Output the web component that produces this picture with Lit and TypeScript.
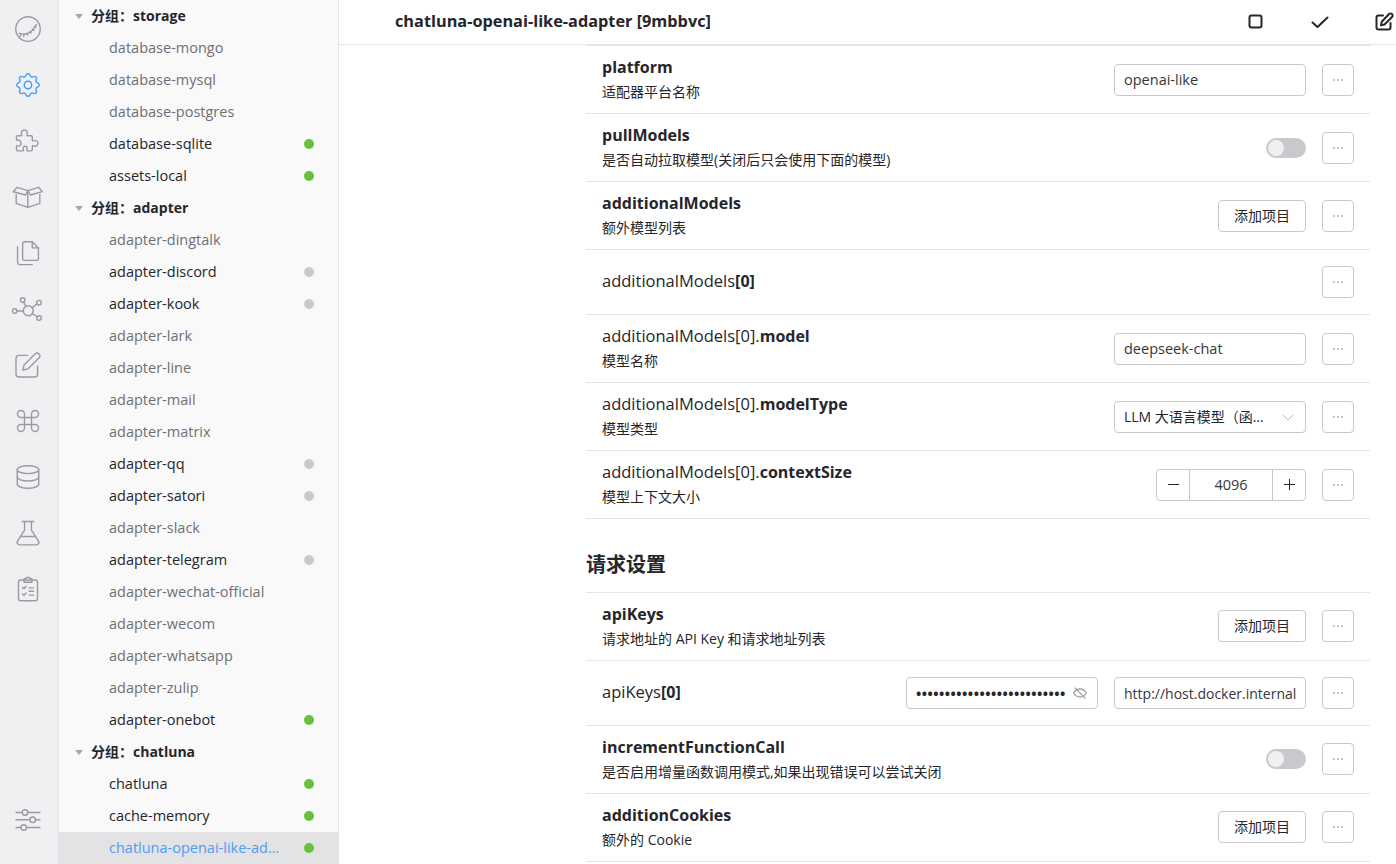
import { LitElement, html, css, svg } from "lit";
import { customElement } from "lit/decorators.js";

const sc = (s: number, body: unknown, cx = 12, cy = 12) =>
  svg`<g transform="translate(16 16) scale(${s}) translate(${-cx} ${-cy})" stroke-width=${1.4 / s}>${body}</g>`;

const ICONS: Record<string, unknown> = {
  logo: sc(1.2, svg`<circle cx="12" cy="12" r="10.2"/><path d="M4.500 15.500c3.500 1.600 8.500.8 12-3.200 1.200-1.400 1.900-2.800 2.400-4.200"/><path d="M6 16.600l-.8 1.600M8.700 16.600l-.3 1.700M11.300 15.600l.5 1.600M13.600 14.100l1 1.300M15.600 12.200l1.400.9M17 10l1.500.5"/>`),
  gear: sc(1.25, svg`<path d="M10.325 4.317c.426 -1.756 2.924 -1.756 3.35 0a1.724 1.724 0 0 0 2.573 1.066c1.543 -.94 3.31 .826 2.37 2.37a1.724 1.724 0 0 0 1.065 2.572c1.756 .426 1.756 2.924 0 3.35a1.724 1.724 0 0 0 -1.066 2.573c.94 1.543 -.826 3.31 -2.37 2.37a1.724 1.724 0 0 0 -2.572 1.065c-.426 1.756 -2.924 1.756 -3.35 0a1.724 1.724 0 0 0 -2.573 -1.066c-1.543 .94 -3.31 -.826 -2.37 -2.37a1.724 1.724 0 0 0 -1.065 -2.572c-1.756 -.426 -1.756 -2.924 0 -3.35a1.724 1.724 0 0 0 1.066 -2.573c-.94 -1.543 .826 -3.31 2.37 -2.37c1 .608 2.296 .07 2.572 -1.065z"/><circle cx="12" cy="12" r="3"/>`),
  puzzle: sc(1.1, svg`<path d="M2 10.500V8.200c0-.6.4-1 1-1h3.200c.7 0 1-.7.6-1.300-1-1.700.2-3.900 2.400-3.900s3.400 2.200 2.400 3.900c-.4.6-.1 1.300.6 1.300h3.200c.6 0 1 .4 1 1v3c0 .7.7 1 1.300.6 1.700-1 3.800.2 3.800 2.300s-2.100 3.300-3.800 2.300c-.6-.4-1.300-.1-1.300.6v3c0 .6-.4 1-1 1h-3.300c-.7 0-1-.7-.6-1.200.8-1.400-.1-3-1.600-3s-2.400 1.600-1.600 3c.3.500 0 1.200-.6 1.200H3c-.6 0-1-.4-1-1v-3c0-.6.5-1 1-.7 1.600.8 3.300-.2 3.300-1.800S4.600 10.400 3 11.200c-.5.300-1 0-1-.7z"/>`, 12.5, 12),
  box: svg`<g stroke-width="1.400"><path d="M5.200 6.300 15.800 9.700 26.800 6.300 30.200 10.700 18.500 14 15.800 9.700 13.500 14 1.200 10.700z"/><path d="M4.200 13.500v8.800l11.600 4 12-4v-8.800"/><path d="M15.800 9.700v16.600"/></g>`,
  files: sc(1.13, svg`<path d="M9 2h7l5.500 5.500V17c0 .8-.7 1.500-1.500 1.500H9c-.8 0-1.500-.7-1.500-1.500V3.500C7.500 2.700 8.200 2 9 2z"/><path d="M16 2v5.500h5.500"/><path d="M3 6.500V20c0 1.300 1 2.300 2.300 2.300H16"/>`, 12.25, 12),
  graph: svg`<g stroke-width="1.400"><circle cx="16.300" cy="17.700" r="5"/><circle cx="2.700" cy="18" r="2.300"/><circle cx="10.700" cy="7" r="2.300"/><circle cx="27" cy="9.700" r="2.300"/><circle cx="27" cy="25" r="2.300"/><path d="M5 18h6.300M11.700 9.100l2.100 4.300M25 11 20.100 14.600M25 23.500 20.200 20.700"/></g>`,
  edit: sc(1.2, svg`<path d="M11.500 4H4.500C3.100 4 2 5.100 2 6.500v13C2 20.900 3.100 22 4.500 22h13c1.400 0 2.500-1.100 2.500-2.500V13"/><path d="M18.300 2.500a2.300 2.300 0 0 1 3.200 3.200L12 15.200l-4.300 1 1-4.200z"/>`),
  cmd: sc(1.17, svg`<path d="M9 9V6a3 3 0 1 0-3 3zM9 9h6M15 9h3a3 3 0 1 0-3-3zM15 9v6M15 15v3a3 3 0 1 0 3-3zM15 15H9M9 15H6a3 3 0 1 0 3 3zM9 15V9"/>`),
  db: sc(1.13, svg`<ellipse cx="12" cy="5.500" rx="9.500" ry="3.500"/><path d="M2.500 5.500v13c0 1.900 4.300 3.500 9.500 3.500s9.500-1.600 9.500-3.500v-13"/><path d="M2.500 12c0 1.900 4.300 3.500 9.500 3.500s9.500-1.600 9.500-3.500"/>`, 12, 12),
  flask: sc(1.15, svg`<path d="M7 2h10"/><path d="M9 2v7.500L2.800 19.300C2 20.700 3 22.300 4.600 22.300h14.800c1.600 0 2.600-1.600 1.800-3L15 9.500V2"/><path d="M5.800 15h12.400"/>`),
  clip: sc(1.12, svg`<rect x="3.500" y="4" width="17" height="18.500" rx="2"/><path d="M8.500 4V3.500c0-.6.500-1 1-1h1c0-1.300 3-1.300 3 0h1c.5 0 1 .4 1 1V6h-7z"/><path d="M7 10.500l1.300 1.300 2-2.300M7 16.500l1.300 1.300 2-2.300M13 11h4M13 14h4M13 17.500h4"/>`, 12, 12),
  sliders: sc(1, svg`<path d="M0 4.500h6.200M11.800 4.500H24M0 11.800h13.900M19.500 11.800H24M0 19.500h4.900M10.500 19.500H24"/><circle cx="9" cy="4.500" r="2.800"/><circle cx="16.700" cy="11.800" r="2.800"/><circle cx="7.700" cy="19.500" r="2.800"/>`),
};

const TOP = ["logo", "gear", "puzzle", "box", "files", "graph", "edit", "cmd", "db", "flask", "clip"];

type Item = { g?: boolean; t: string; s?: "on" | "off"; sel?: boolean };
const tree: Item[] = [
  { g: true, t: "分组：storage" },
  { t: "database-mongo" }, { t: "database-mysql" }, { t: "database-postgres" },
  { t: "database-sqlite", s: "on" }, { t: "assets-local", s: "on" },
  { g: true, t: "分组：adapter" },
  { t: "adapter-dingtalk" }, { t: "adapter-discord", s: "off" }, { t: "adapter-kook", s: "off" },
  { t: "adapter-lark" }, { t: "adapter-line" }, { t: "adapter-mail" }, { t: "adapter-matrix" },
  { t: "adapter-qq", s: "off" }, { t: "adapter-satori", s: "off" }, { t: "adapter-slack" },
  { t: "adapter-telegram", s: "off" }, { t: "adapter-wechat-official" }, { t: "adapter-wecom" },
  { t: "adapter-whatsapp" }, { t: "adapter-zulip" }, { t: "adapter-onebot", s: "on" },
  { g: true, t: "分组：chatluna" },
  { t: "chatluna", s: "on" }, { t: "cache-memory", s: "on" },
  { t: "chatluna-openai-like-adapter", s: "on", sel: true },
];

@customElement("app-root")
export class AppRoot extends LitElement {
  static styles = css`
    :host { display: flex; width: 1396px; height: 864px; overflow: hidden; background: #fff; color: #222;
      font-family: "Open Sans", "Noto Sans CJK SC", sans-serif; font-size: 14px; }
    .bar { width: 58px; flex: none; background: #f0f0f3; border-right: 1px solid #e4e5ea; display: flex; flex-direction: column; padding-top: 1px; box-sizing: content-box; }
    .ico { height: 56px; width: 55px; flex: none; display: flex; align-items: center; justify-content: center; }
    .ico svg { width: 32px; height: 32px; flex: none; fill: none; stroke: #9b9b9f; stroke-linecap: round; stroke-linejoin: round; overflow: visible; }
    .ico.active svg { stroke: #409eff; }
    .spacer { flex: 1; }
    .foot { height: 16px; flex: none; }
    .side { width: 279px; flex: none; background: #f9f9fa; border-right: 1px solid #e4e5ea; overflow: hidden; }
    .node { height: 32px; display: flex; align-items: center; padding-left: 50px; padding-right: 24px; color: #6f6f73; font-size: 14.500px; }
    .node.on, .node.off { color: #26262a; }
    .node.g { color: #26262a; font-weight: 700; padding-left: 16px; font-size: 14px; }
    .node.sel { background: #e3e3e6; color: #4c9cf8; }
    .caret { width: 0; height: 0; border: 4px solid transparent; border-top: 5px solid #a8a8ac; border-bottom: 0; margin-right: 8px; }
    .label { flex: 1; min-width: 0; overflow: hidden; text-overflow: ellipsis; white-space: nowrap; margin-bottom: 2px; }
    .dot { width: 10px; height: 10px; border-radius: 50%; flex: none; margin-left: 20px; }
    .node.on .dot { background: #67c23a; }
    .node.off .dot { background: #c8c9cc; }
    .main { flex: 1; min-width: 0; display: flex; flex-direction: column; }
    .head { height: 44px; flex: none; border-bottom: 1px solid #e4e5ea; display: flex; align-items: center; padding-left: 56px; overflow: hidden; }
    .title { flex: 1; font-weight: 700; font-size: 16.300px; color: #26262a; white-space: nowrap; margin-bottom: 2px; }
    .tool { width: 64px; flex: none; display: flex; justify-content: center; }
    .tool svg { width: 20px; height: 20px; fill: none; stroke: #26262a; stroke-width: 2; stroke-linecap: round; stroke-linejoin: round; }
    .tools { display: flex; margin-right: -20px; margin-bottom: 1px; }
    .body { flex: 1; min-height: 0; overflow: hidden; padding: 0 26px 0 247px; }
    .row { display: flex; align-items: center; border-top: 1px solid #e4e5ea; padding: 9px 16px 10px; gap: 16px; }
    .row.single { padding: 16px; }
    .row.end { border-bottom: 1px solid #e4e5ea; }
    .first .row:not(.single) > :not(.left) { margin-top: 1px; }
    .left { flex: 1; min-width: 0; }
    .name { font-size: 16.500px; line-height: 24px; color: #26262a; white-space: nowrap; }
    .single .name { margin-bottom: 2px; }
    .name b { font-weight: 700; font-size: 16px; }
    .desc { font-size: 14px; line-height: 22px; padding-top: 2px; color: #26262a; white-space: nowrap; }
    h2 { margin: 0; font-size: 20px; font-weight: 700; line-height: 30px; padding: 31px 0 12px; color: #26262a; }
    .more { width: 32px; height: 32px; box-sizing: border-box; flex: none; border: 1px solid #c8c9cc; border-radius: 4px; display: flex; align-items: center; justify-content: center; background: #fff; }
    .more svg { width: 12px; height: 4px; fill: #77777c; }
    .input { width: 192px; height: 32px; box-sizing: border-box; flex: none; border: 1px solid #c8c9cc; border-radius: 4px; display: flex; align-items: center; padding: 0 9px; color: #36363a; white-space: nowrap; overflow: hidden; background: #fff; font-size: 14.500px; }
    .input.url { font-size: 14px; }
    .input .txt { flex: 1; min-width: 0; overflow: hidden; }
    .input .ell { text-overflow: ellipsis; font-size: 14px; color: #26262a; margin-bottom: 2px; }
    .pw .txt { font-size: 14px; font-weight: 700; letter-spacing: .5px; color: #26262a; }
    .input svg { width: 16px; height: 16px; flex: none; fill: none; stroke: #b4b6bc; stroke-width: 1; stroke-linecap: round; stroke-linejoin: round; margin-left: 6px; }
    .pw svg { stroke: #a0a2a8; stroke-width: 1.300; }
    .btn { height: 32px; box-sizing: border-box; width: 88px; flex: none; border: 1px solid #c8c9cc; border-radius: 4px; display: flex; align-items: center; justify-content: center; color: #26262a; background: #fff; padding-bottom: 2px; }
    .switch { width: 40px; height: 20px; flex: none; border-radius: 10px; background: #c8c9cc; display: flex; align-items: center; padding: 2px; box-sizing: border-box; }
    .knob { width: 16px; height: 16px; border-radius: 50%; background: #f0f0f3; }
    .num { width: 150px; height: 32px; box-sizing: border-box; flex: none; border: 1px solid #c8c9cc; border-radius: 4px; display: flex; align-items: stretch; background: #fff; color: #36363a; font-size: 14.500px; }
    .num .step { width: 32px; flex: none; display: flex; align-items: center; justify-content: center; }
    .num .step svg { width: 11px; height: 11px; fill: none; stroke: #26262a; stroke-width: 1; }
    .num .val { flex: 1; display: flex; align-items: center; justify-content: center; border-left: 1px solid #c8c9cc; border-right: 1px solid #c8c9cc; }
  `;

  more() {
    return html`<div class="more"><svg viewBox="0 0 12 4"><circle cx="2" cy="2" r=".8"/><circle cx="6" cy="2" r=".8"/><circle cx="10" cy="2" r=".8"/></svg></div>`;
  }
  input(v: string, cls = "") {
    return html`<div class="input ${cls}"><span class="txt">${v}</span></div>`;
  }
  add() {
    return html`<div class="btn">添加项目</div>`;
  }
  sw() {
    return html`<div class="switch"><div class="knob"></div></div>`;
  }
  row(name: unknown, desc: string | null, ctl: unknown, cls = "") {
    return html`<div class="row ${desc === null ? "single" : ""} ${cls}">
      <div class="left"><div class="name">${name}</div>${desc === null ? "" : html`<div class="desc">${desc}</div>`}</div>
      ${ctl}${this.more()}
    </div>`;
  }

  render() {
    return html`
      <nav class="bar">
        ${TOP.map((k) => html`<div class="ico ${k === "gear" ? "active" : ""}"><svg viewBox="0 0 32 32">${ICONS[k]}</svg></div>`)}
        <div class="spacer"></div>
        <div class="ico"><svg viewBox="0 0 32 32">${ICONS.sliders}</svg></div>
        <div class="foot"></div>
      </nav>
      <aside class="side">
        ${tree.map((n) => html`<div class="node ${n.g ? "g" : ""} ${n.s ?? ""} ${n.sel ? "sel" : ""}">
          ${n.g ? html`<span class="caret"></span>` : ""}
          <span class="label">${n.t}</span>
          ${n.s ? html`<span class="dot"></span>` : ""}
        </div>`)}
      </aside>
      <section class="main">
        <header class="head">
          <div class="title">chatluna-openai-like-adapter [9mbbvc]</div>
          <div class="tools">
            <div class="tool"><svg viewBox="0 0 20 20"><rect x="3.500" y="3.500" width="12" height="12" rx="2"/></svg></div>
            <div class="tool"><svg viewBox="0 0 20 20"><path d="M2.500 10.500 7.500 15 17.500 5.500"/></svg></div>
            <div class="tool"><svg viewBox="0 0 20 20"><path d="M9 3.500H4.500C3.300 3.500 2.500 4.300 2.500 5.500v10c0 1.200.8 2 2 2h10c1.200 0 2-.8 2-2V11"/><path d="M15 2a1.800 1.800 0 0 1 3 3l-7.500 7.500-3.500.8.800-3.500z"/></svg></div>
          </div>
        </header>
        <div class="body">
          <div class="first">
            ${this.row(html`<b>platform</b>`, "适配器平台名称", this.input("openai-like"))}
            ${this.row(html`<b>pullModels</b>`, "是否自动拉取模型(关闭后只会使用下面的模型)", this.sw())}
            ${this.row(html`<b>additionalModels</b>`, "额外模型列表", this.add())}
            ${this.row(html`additionalModels<b>[0]</b>`, null, "")}
            ${this.row(html`additionalModels[0].<b>model</b>`, "模型名称", this.input("deepseek-chat"))}
            ${this.row(html`additionalModels[0].<b>modelType</b>`, "模型类型", html`<div class="input"><span class="txt ell">LLM 大语言模型（函数调用）</span><svg viewBox="0 0 16 16"><path d="M3 6 8 11 13 6"/></svg></div>`)}
            ${this.row(html`additionalModels[0].<b>contextSize</b>`, "模型上下文大小", html`<div class="num"><div class="step"><svg viewBox="0 0 11 11"><path d="M0 5.500h11"/></svg></div><div class="val">4096</div><div class="step"><svg viewBox="0 0 11 11"><path d="M0 5.500h11M5.500 0v11"/></svg></div></div>`, "end")}
          </div>
          <h2>请求设置</h2>
          ${this.row(html`<b>apiKeys</b>`, "请求地址的 API Key 和请求地址列表", this.add())}
          ${this.row(html`apiKeys<b>[0]</b>`, null, html`<div class="input pw"><span class="txt">${"•".repeat(36)}</span><svg viewBox="0 0 16 16"><path d="M1.500 8s2.500-4 6.500-4 6.500 4 6.500 4-2.500 4-6.500 4-6.500-4-6.500-4z"/><path d="M3 3l10 10"/></svg></div>${this.input("http://host.docker.internal", "url")}`)}
          ${this.row(html`<b>incrementFunctionCall</b>`, "是否启用增量函数调用模式,如果出现错误可以尝试关闭", this.sw())}
          ${this.row(html`<b>additionCookies</b>`, "额外的 Cookie", this.add(), "end")}
        </div>
      </section>
    `;
  }
}
